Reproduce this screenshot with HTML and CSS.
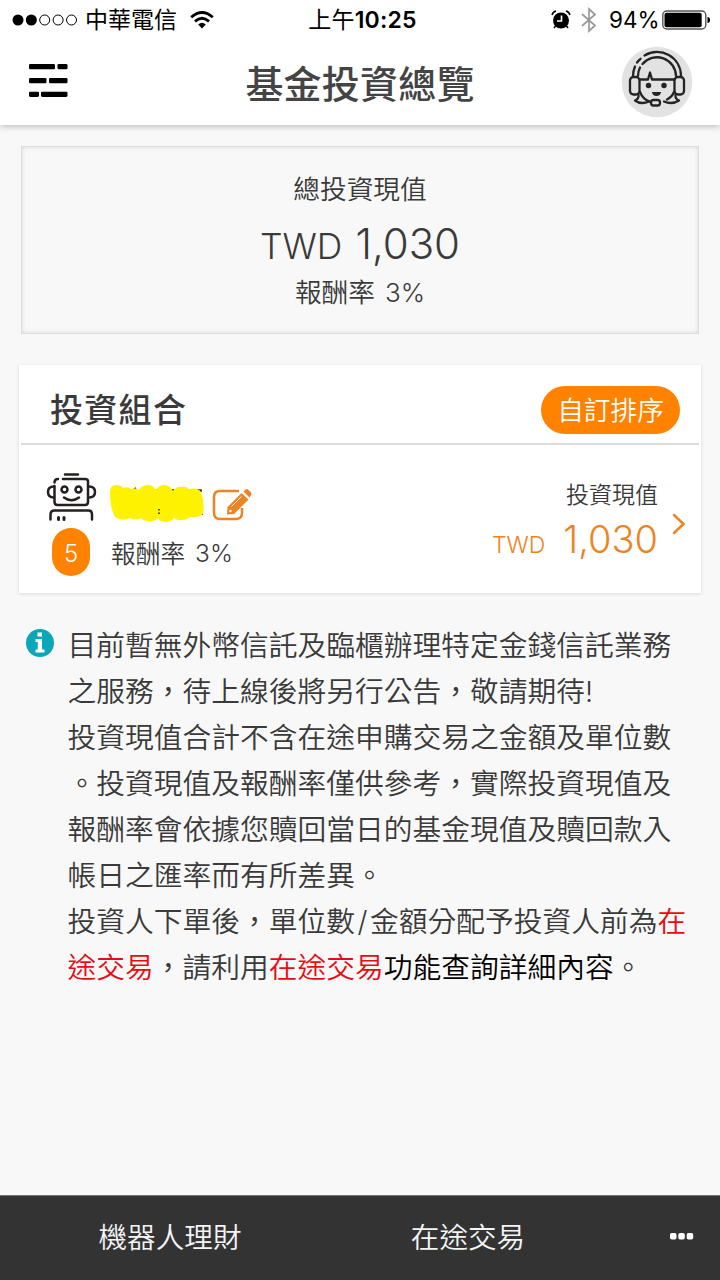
FILE: index.html
```html
<!DOCTYPE html>
<html lang="zh-Hant">
<head>
<meta charset="utf-8">
<title>基金投資總覽</title>
<link rel="stylesheet" href="styles.css">
</head>
<body>
<header class="header">
  <div class="status">
    <div class="status-left">
      <svg class="signal" viewBox="0 0 66 12"><circle cx="6" cy="6" r="5.5"/><circle cx="19.3" cy="6" r="5.5"/><g fill="none" stroke="#000" stroke-width="1"><circle cx="32.7" cy="6" r="5"/><circle cx="46.1" cy="6" r="5"/><circle cx="59.5" cy="6" r="5"/></g></svg>
      <span class="carrier">中華電信</span>
      <svg class="wifi" viewBox="0 0 24 18"><g fill="none" stroke="#000" stroke-width="2.8"><path d="M1.2 6.3Q12-3.3 22.8 6.3"/><path d="M5 10.4Q12 4.2 19 10.4"/></g><path d="M8.2 13.4Q12 10.2 15.8 13.4L12 17.4Z"/></svg>
    </div>
    <div class="clock">上午<b>10:25</b></div>
    <div class="status-right">
      <svg class="alarm" viewBox="0 0 20 20"><circle cx="10" cy="10.5" r="8"/><path d="M1 5Q2 1.8 5 1M19 5Q18 1.8 15 1M4.5 16L3 18M15.5 16L17 18" fill="none" stroke="#000" stroke-width="1.5"/><path d="M10.5 5.5V11H6" fill="none" stroke="#fff" stroke-width="1.6"/></svg>
      <svg class="bluetooth" viewBox="0 0 16 26"><path d="M1 7L14 18.5L8 24V2L14 7.5L1 19" fill="none" stroke="#999" stroke-width="1.7"/></svg>
      <span class="percent">94%</span>
      <svg class="battery" viewBox="0 0 48 20"><rect x=".8" y="1" width="43" height="18" rx="4" fill="none" stroke="#555" stroke-width="1.4"/><rect x="2.5" y="2.7" width="37.2" height="14.6" rx="2"/><path d="M45.5 7Q48 7 48 10T45.5 13Z"/></svg>
    </div>
  </div>
  <div class="nav">
    <svg class="menu" viewBox="0 0 40 34"><rect x="1" y="1" width="26" height="5.2" rx="1.3"/><rect x="29.5" y="1" width="10" height="5.2" rx="1.3"/><rect x="1" y="15" width="17.5" height="5.2" rx="1.3"/><rect x="21" y="15" width="18.5" height="5.2" rx="1.3"/><rect x="1" y="28.7" width="10" height="5.2" rx="1.3"/><rect x="13" y="28.7" width="26.5" height="5.2" rx="1.3"/></svg>
    <h1 class="title">基金投資總覽</h1>
    <svg class="avatar" viewBox="0 0 72 72"><circle cx="36" cy="36" r="35.3" fill="#e2e2e2"/>
      <g fill="none" stroke="#252323" stroke-width="2.300" stroke-linecap="round" stroke-linejoin="round">
        <path d="M12 30A24 24 0 0 1 14 20.500M16 16.500A24 24 0 0 1 19.500 12.800M23.500 9.500A24 24 0 0 1 60 30"/>
        <path d="M17 30A19 19 0 0 1 19 21.500M21.500 18A19 19 0 0 1 55 30"/>
        <rect x="9" y="31" width="9.500" height="17.500" rx="3.500"/><rect x="53.500" y="31" width="9.500" height="17.500" rx="3.500"/>
        <path d="M18.500 33.500H27L29 26.500L31 33.500H53.500M19 46Q22 54 30 56M53 46Q51 51 46 53.500"/>
        <path d="M17.500 49Q18 53 14 54.500Q20 59 28 55.500M54.500 49Q54 53 58 54.500Q51 59 43 55.500"/>
        <rect x="30" y="54" width="9" height="5.500" rx="2.500"/>
      </g>
      <g fill="#252323"><circle cx="27.500" cy="39.500" r="2.700"/><circle cx="43" cy="39.500" r="2.700"/><path d="M31 46H40Q39.500 50 35.500 50T31 46Z"/></g>
    </svg>
  </div>
</header>
<main class="content">
  <section class="summary">
    <div class="summary-label">總投資現值</div>
    <div class="summary-value"><span class="currency">TWD</span><span class="amount">1,030</span></div>
    <div class="summary-rate">報酬率<span class="rate">3%</span></div>
  </section>
  <section class="card">
    <div class="card-head"><h2 class="card-title">投資組合</h2><button class="sort">自訂排序</button></div>
    <div class="item">
      <div class="item-left">
        <div class="item-name">
          <svg class="robot" viewBox="0 0 50 50"><g fill="none" stroke="#252020" stroke-width="2.500" stroke-linecap="round" stroke-linejoin="round"><path d="M18 1.500H31M16 6H38Q41 6 41 8.500V29Q41 32 38 32H10.500Q7.500 32 7.500 29V13M7.500 9.500Q7.500 6 11 6"/><path d="M7 13.500Q1 13.500 1 19T7 24.500M42 13.500Q48 13.500 48 19T42 24.500"/><circle cx="17.500" cy="16.500" r="3"/><circle cx="31.500" cy="16.500" r="3"/><path d="M17 24.500Q24.500 30 32 24.500M3.500 46.500V41.500Q3.500 37.500 7.500 37.500H41.500Q45 37.500 45 41.500V46.500"/><path d="M11.500 44.500V46.500M17 44.500V46.500" stroke-width="3"/></g></svg>
          <svg class="scribble" viewBox="0 0 96 40"><path d="M24 4l2-1M46 5h4M61 5h3M78 5h13v2M92 27v3" stroke="#302b38" stroke-width="1.600" fill="none"/><path fill="#fff200" d="M0 7Q0 0 6 0Q11 0 13 3Q18 1 21 4Q25 2 29 5Q32 0 38 0Q43 0 46 5Q49 0 54 0Q60 0 63 6Q67 1 72 2Q76 1 79 4Q88 2 91 7Q95 19 93 29Q88 33 80 32Q77 35 72 35Q68 36 64 33Q61 37 56 37Q50 37 48 33Q44 37 38 36Q33 36 31 33Q26 36 20 33Q12 37 5 32Q0 23 0 7Z"/><path d="M49 24v1.500M49 27.500v1.500" stroke="#302b38" stroke-width="1.600"/></svg>
          <svg class="edit" viewBox="0 0 40 34"><path d="M27 3H8Q2 3 2 9V25Q2 31 8 31H24Q30 31 30 25V20" fill="none" stroke="#ed8423" stroke-width="2.500"/><path fill="#ed8423" d="M15 26.500L15.500 19L29.500 5L36.500 11.500L22 26ZM31.500 3.500L33.500 1.500Q35 .5 36.500 2L38.800 4.300Q40 6 38.800 7.500L37.500 9.500Z"/><path d="M19.500 18.500L29.500 8.500" stroke="#fff" stroke-width="1"/><circle cx="18.500" cy="23" r="1.200" fill="#fff"/></svg>
        </div>
        <div class="item-rate"><span class="badge">5</span><span class="rate-label">報酬率</span><span class="rate-num">3%</span></div>
      </div>
      <div class="item-right">
        <div class="value-label">投資現值</div>
        <div class="value"><span class="value-cur">TWD</span><span class="value-num">1,030</span></div>
      </div>
      <svg class="chevron" viewBox="0 0 14 22"><path d="M2 2L11.500 11L2 20" fill="none" stroke="#ed8423" stroke-width="2.500" stroke-linecap="round"/></svg>
    </div>
  </section>
  <section class="notice">
    <svg class="info" viewBox="0 0 28 28"><circle cx="14" cy="14" r="14" fill="#0ba6b8"/><path fill="#fff" d="M11.500 3.500H16V7.500H11.500ZM9.500 10H16V20.500H18.500V23.500H9.500V20.500H11.800V13H9.500Z"/></svg>
    <div class="notice-text">
      <div>目前暫無外幣信託及臨櫃辦理特定金錢信託業務</div>
      <div>之服務，待上線後將另行公告，敬請期待!</div>
      <div>投資現值合計不含在途申購交易之金額及單位數</div>
      <div>。投資現值及報酬率僅供參考，實際投資現值及</div>
      <div>報酬率會依據您贖回當日的基金現值及贖回款入</div>
      <div>帳日之匯率而有所差異。</div>
      <div>投資人下單後，單位數<span class="slash">/</span>金額分配予投資人前為<em>在</em></div>
      <div><em>途交易</em>，請利用<em>在途交易</em><strong>功能查詢詳細內容</strong>。</div>
    </div>
  </section>
</main>
<footer class="tabs">
  <a class="tab">機器人理財</a><a class="tab">在途交易</a>
  <svg class="more" viewBox="0 0 24 8"><g fill="#fff"><rect x="0" y="1" width="6.500" height="6.500" rx="1.800"/><rect x="8.300" y="1" width="6.500" height="6.500" rx="1.800"/><rect x="16.700" y="1" width="6.500" height="6.500" rx="1.800"/></g></svg>
</footer>
</body>
</html>
```
FILE: styles.css
```css
* { box-sizing: border-box; }
body { margin: 0; width: 720px; height: 1280px; display: flex; flex-direction: column; background: #f8f8f8; color: #3a3a3a; font-family: Inter, "Noto Sans CJK TC", sans-serif; font-weight: 350; overflow: hidden; }
svg { display: block; flex: none; overflow: visible; }
h1, h2 { margin: 0; font-weight: 500; }
em, strong { font-style: normal; font-weight: inherit; }
.header { height: 125px; background: #fff; box-shadow: 0 1px 7px rgba(0,0,0,.28); }
.status { height: 40px; display: grid; grid-template-columns: 260px 200px 260px; align-items: center; color: #000; font-weight: 400; }
.status-left, .status-right { display: flex; align-items: center; }
.status-left { padding-left: 12px; }
.signal { width: 66px; height: 12px; }
.carrier { margin-left: 7px; font-size: 23px; line-height: 40px; }
.wifi { width: 24px; height: 18px; margin-left: 13px; }
.clock { text-align: center; font-size: 23px; line-height: 40px; padding-left: 5px; letter-spacing: .2px; white-space: nowrap; }
.clock b { font-weight: 600; }
.status-right { padding-left: 91px; }
.alarm { width: 20px; height: 20px; }
.bluetooth { width: 16px; height: 26px; margin-left: 10px; }
.percent { width: 48px; margin-left: 12px; font-size: 22.500px; line-height: 40px; }
.battery { width: 48px; height: 20px; margin-left: 5px; }
.nav { height: 85px; display: grid; grid-template-columns: 118px 1fr 118px; align-items: center; }
.menu { width: 40px; height: 34px; margin: -5px 0 0 28px; }
.title { text-align: center; font-size: 38px; line-height: 50px; letter-spacing: .200px; color: #444; padding-top: 3px; }
.avatar { width: 72px; height: 72px; margin: -2px 0 0 19px; }
.content { flex: 1; padding: 21px 19px 0; }
.summary { height: 188px; margin: 0 2px; border: 1px solid #ddd; box-shadow: inset 0 0 5px rgba(0,0,0,.12); padding-top: 24px; text-align: center; }
.summary-label { font-size: 26.700px; line-height: 36px; }
.summary-value { display: flex; justify-content: center; align-items: baseline; gap: 13px; line-height: 62px; height: 64px; padding-top: 6px; }
.currency { font-size: 35.500px; }
.amount { font-size: 42px; }
.summary-rate { font-size: 26.700px; line-height: 42px; }
.rate { margin-left: 10px; font-size: 26px; }
.card { height: 228px; margin-top: 31px; background: #fff; box-shadow: 0 1px 4px rgba(0,0,0,.13); }
.card-head { height: 80px; margin: 0 2px; padding: 11px 19px 0 29px; border-bottom: 2px solid #ddd; display: flex; align-items: center; justify-content: space-between; }
.card-title { font-size: 33px; line-height: 44px; letter-spacing: 1.300px; }
.sort { width: 139px; height: 48px; border: 0; border-radius: 24px; background: #ff8200; color: #fff; font: inherit; font-size: 26.700px; line-height: 48px; padding: 0; }
.item { height: 148px; display: flex; padding-left: 28px; }
.item-left { width: 300px; padding-top: 28px; }
.item-name { height: 50px; display: flex; }
.robot { width: 50px; height: 50px; }
.scribble { width: 96px; height: 40px; margin: 12px 0 0 13px; }
.edit { width: 40px; height: 34px; margin: 15px 0 0 6px; }
.item-rate { display: flex; align-items: center; height: 54px; padding: 4px 0 0 5px; font-size: 24.700px; }
.badge { width: 38px; height: 48px; border-radius: 19px; background: #ff8200; color: #fff; text-align: center; line-height: 51px; font-size: 24px; font-weight: 300; }
.rate-label { margin-left: 21px; }
.rate-num { margin-left: 10px; font-size: 24.500px; padding-top: 1px; }
.item-right { width: 311px; padding-top: 33px; text-align: right; }
.value-label { font-size: 23px; line-height: 34px; }
.value { display: flex; justify-content: flex-end; align-items: baseline; gap: 18px; line-height: 54px; color: #ed8423; }
.value-cur { font-size: 23px; }
.value-num { font-size: 38px; }
.chevron { width: 14px; height: 22px; margin: 68px 0 0 14px; }
.notice { display: flex; padding: 30px 0 0 7px; }
.info { width: 28px; height: 28px; margin-top: 6px; }
.notice-text { margin-left: 13.500px; font-size: 28.750px; line-height: 46px; white-space: nowrap; }
.notice-text em { color: #e60c12; }
.notice-text strong { color: #000; }
.slash { display: inline-block; width: 15px; text-align: center; }
.tabs { height: 85px; border-top: 1px solid #777; background: #333; color: #f4f4f4; display: grid; grid-template-columns: 312px 312px 96px; align-items: center; }
.tab { text-align: center; font-size: 28.600px; line-height: 84px; padding-left: 28px; }
.tab + .tab { padding-left: 0; }
.more { width: 24px; height: 8px; margin: -5px 0 0 46px; }
```
